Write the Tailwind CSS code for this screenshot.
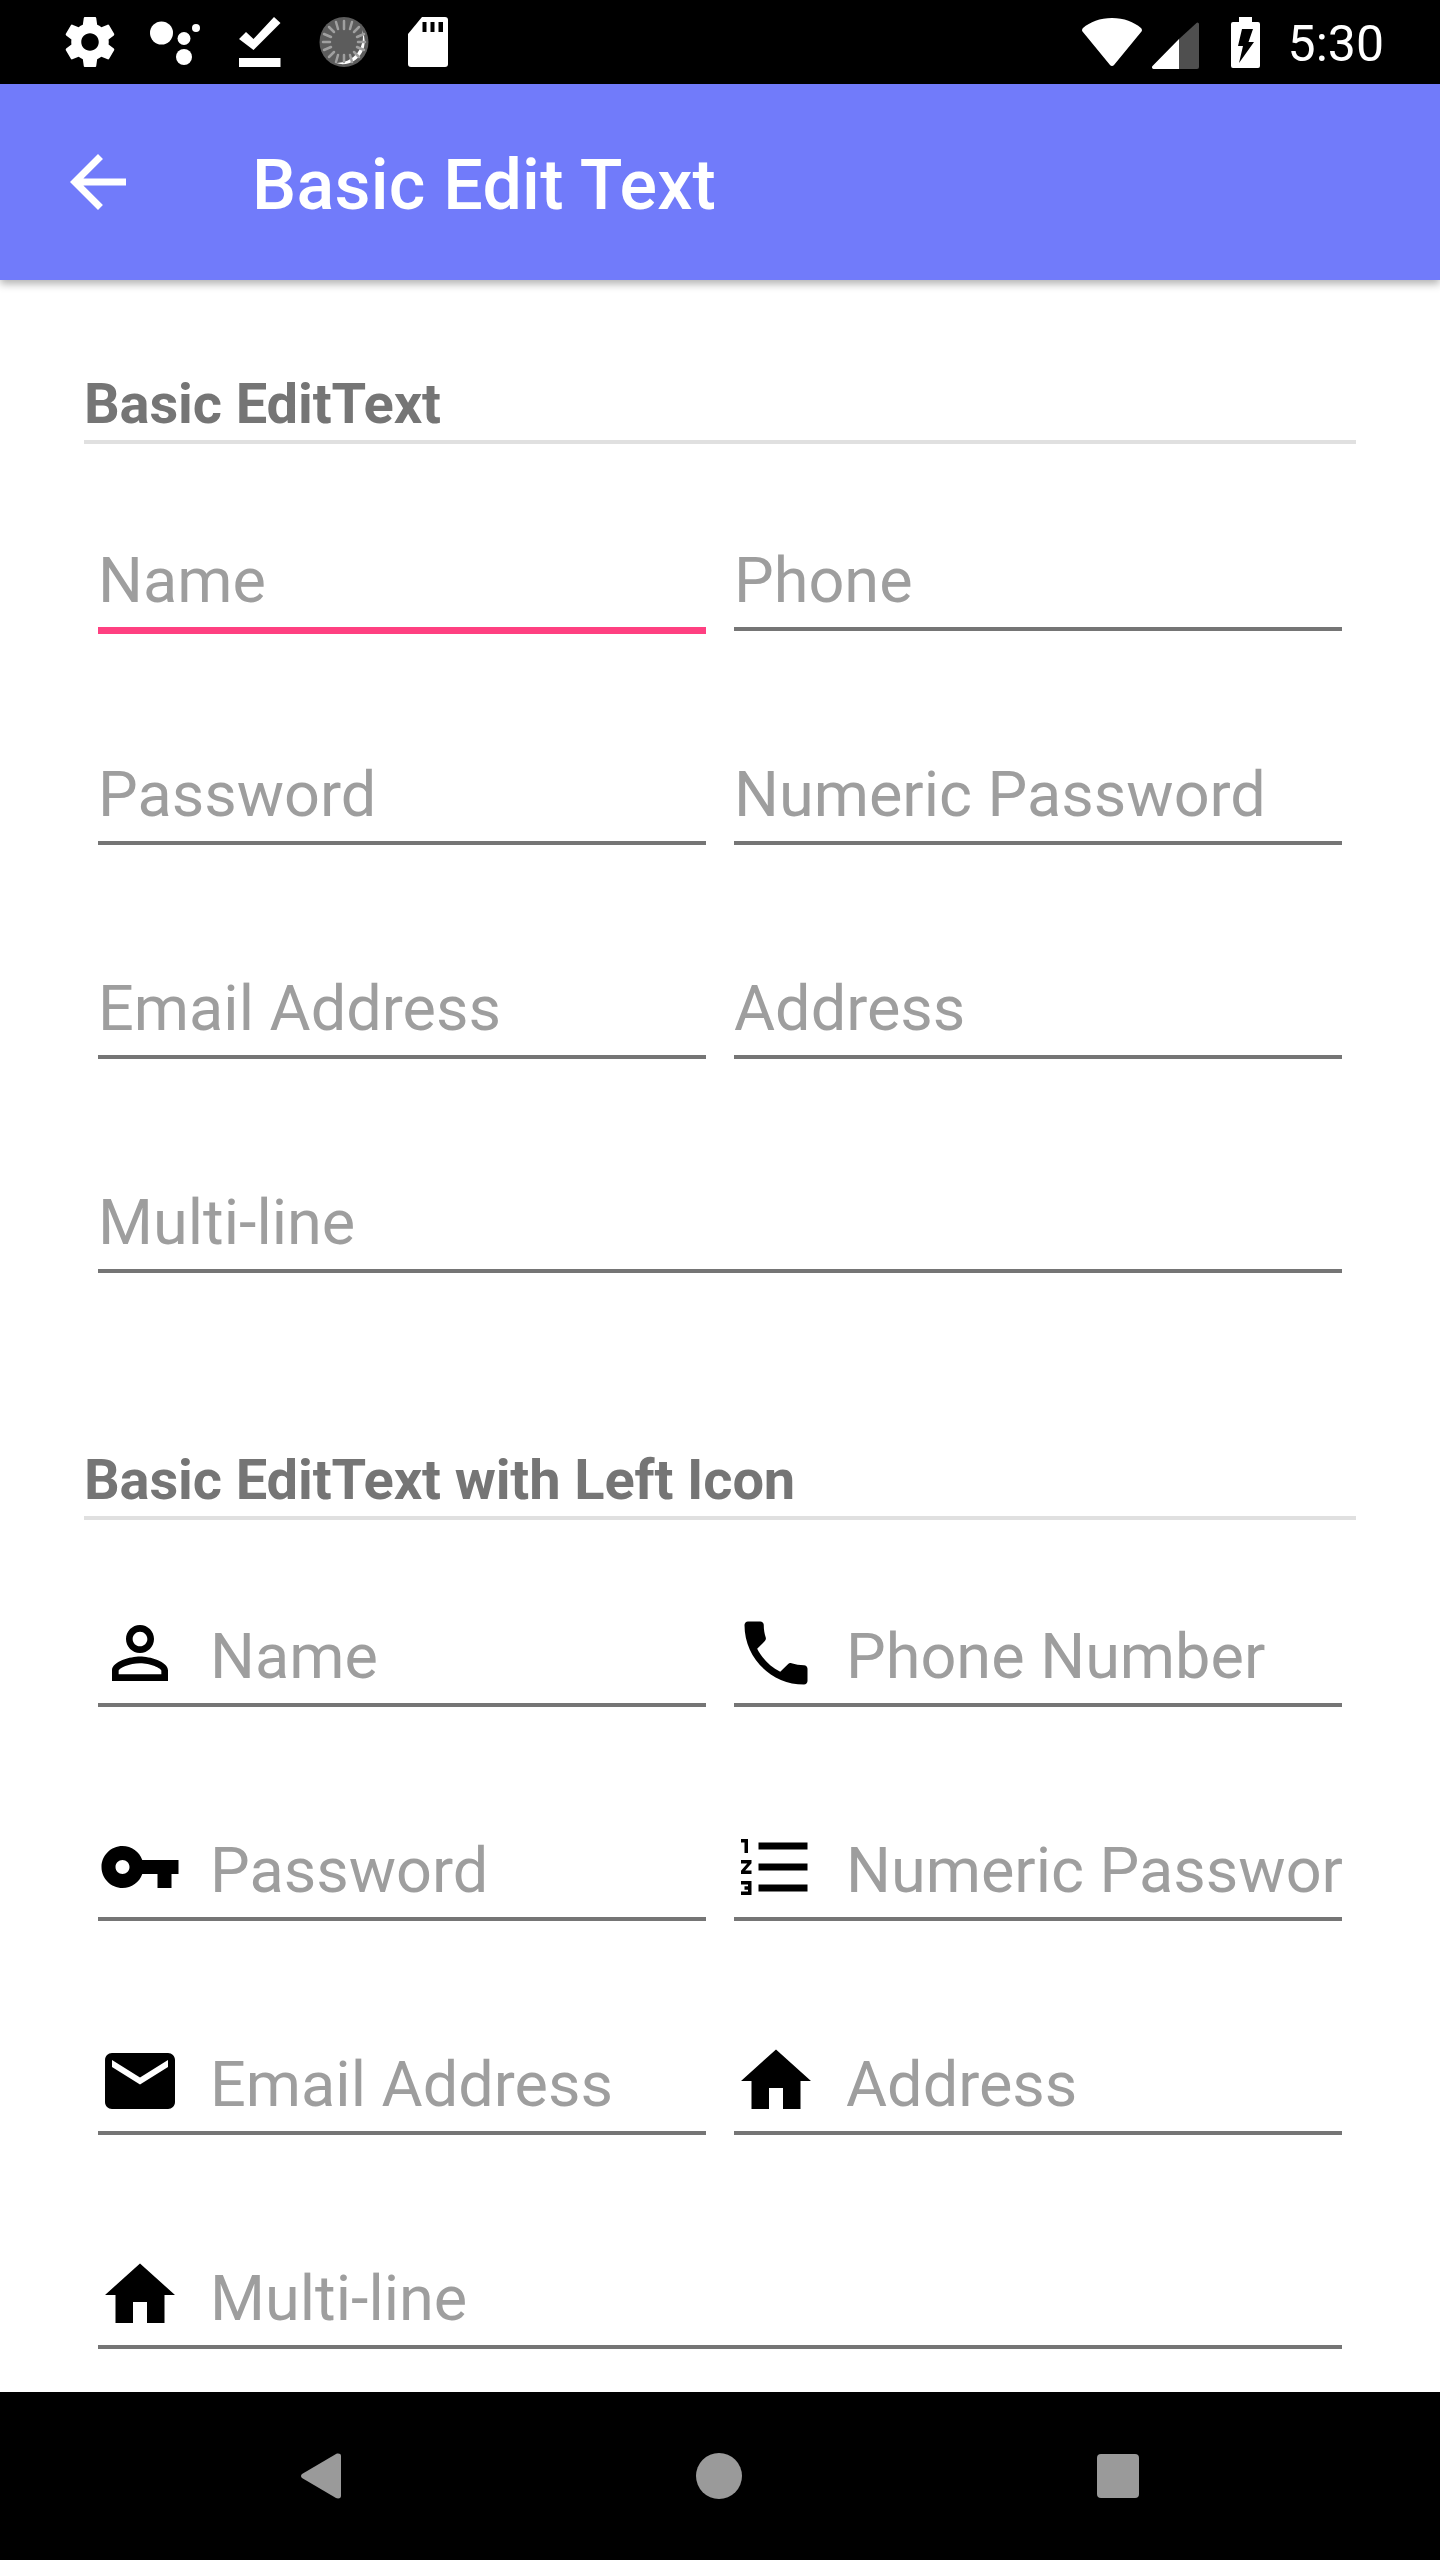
<!DOCTYPE html>
<html lang="en">
<head>
    <meta charset="UTF-8">
    <meta name="viewport" content="width=device-width, initial-scale=1.0">
    <title>Basic Edit Text</title>
    <script src="https://cdn.jsdelivr.net/npm/@tailwindcss/browser@4"></script>
</head>
<body class="bg-white font-[Roboto,sans-serif]">
    <div class="w-[1440px] h-[2560px] flex flex-col overflow-hidden">

        <!-- status bar -->
        <div class="h-[84px] bg-black shrink-0 flex items-center text-white">
            <div class="flex items-center h-full">
                <svg class="ml-[60px] w-[60px] h-[60px]" viewBox="0 0 24 24" fill="#fff"><path d="M19.43 12.98c.04-.32.07-.64.07-.98s-.03-.66-.07-.98l2.11-1.65c.19-.15.24-.42.12-.64l-2-3.46c-.12-.22-.39-.3-.61-.22l-2.49 1c-.52-.4-1.08-.73-1.69-.98l-.38-2.65C14.46 2.18 14.25 2 14 2h-4c-.25 0-.46.18-.49.42l-.38 2.65c-.61.25-1.17.59-1.69.98l-2.49-1c-.23-.09-.49 0-.61.22l-2 3.46c-.13.22-.07.49.12.64l2.11 1.65c-.04.32-.07.65-.07.98s.03.66.07.98l-2.11 1.65c-.19.15-.24.42-.12.64l2 3.46c.12.22.39.3.61.22l2.49-1c.52.4 1.08.73 1.69.98l.38 2.65c.03.24.24.42.49.42h4c.25 0 .46-.18.49-.42l.38-2.65c.61-.25 1.17-.59 1.69-.98l2.49 1c.23.09.49 0 .61-.22l2-3.46c.12-.22.07-.49-.12-.64l-2.11-1.65zM12 15.5c-1.93 0-3.5-1.57-3.5-3.5s1.57-3.5 3.5-3.5 3.5 1.57 3.5 3.5-1.57 3.5-3.5 3.5z"/></svg>
                <svg class="ml-[24px] w-[56px] h-[60px]" viewBox="144 12 56 60" fill="#fff">
                    <circle cx="161.5" cy="33" r="11.5"/><circle cx="184" cy="38.5" r="6.5"/><circle cx="196" cy="28" r="4"/><circle cx="184" cy="57" r="8"/>
                </svg>
                <svg class="ml-[37px] w-[45px] h-[60px]" viewBox="237 12 45 60" fill="#fff">
                    <polygon points="239,39 246,32 253.500,39 274,17 280.500,23 253.500,50"/><rect x="239" y="58" width="41.500" height="9"/>
                </svg>
                <svg class="ml-[35px] w-[54px] h-[60px]" viewBox="316 12 54 60">
                    <ellipse cx="343" cy="42" rx="24.500" ry="25" fill="#5c5c5c"/>
                    <path d="M 361 30 A 22 23 0 0 1 335 63 A 26 26 0 0 0 361 30 Z" fill="#fff"/>
                    <g stroke="#a0a0a0" stroke-width="2.500" stroke-linecap="round">
                        <path d="M343 21v8M343 55v7M322 42h7M357 42h7M328 27l5 5M353 52l5 5M358 27l-5 5M333 52l-5 5M335 22l2 7M349 55l2 7M351 22l-2 7M337 55l-2 7M323 34l7 3M356 47l7 3M363 34l-7 3M330 47l-7 3"/>
                    </g>
                </svg>
                <svg class="ml-[37px] w-[40px] h-[50px]" viewBox="407 17 40 50">
                    <path d="M421 17h23a3 3 0 0 1 3 3v44a3 3 0 0 1-3 3h-34a3 3 0 0 1-3-3v-30z" fill="#fff"/>
                    <path d="M421.500 22h4v10h-4zM429.500 22h4v10h-4zM437.500 22h4.500v10h-4.500z" fill="#000"/>
                </svg>
            </div>
            <div class="ml-auto flex items-center h-full">
                <svg class="w-[60px] h-[48px]" viewBox="1082 17 60 48" fill="#fff">
                    <path d="M1112 17c12 0 22 4 29 10 1 1 1.300 2.500.500 3.500l-27.500 33.500c-1 1.300-3 1.300-4 0l-27.500-33.500c-.800-1-.500-2.500.500-3.500 7-6 17-10 29-10z"/>
                </svg>
                <svg class="ml-[10px] mt-[6px] w-[47px] h-[47px]" viewBox="1152 20 47 47">
                    <path d="M1179 37v30h18a2 2 0 0 0 2-2v-43a1.500 1.500 0 0 0-2.500-1z" fill="#4f4f4f"/>
                    <path d="M1179 37l-26.500 27c-1 1-.500 3 1 3h25.500z" fill="#fff"/>
                </svg>
                <svg class="ml-[32px] w-[29px] h-[51px]" viewBox="1231 16 29 51">
                    <path d="M1239 16h13v5h6a2 2 0 0 1 2 2v42a2 2 0 0 1-2 2h-25a2 2 0 0 1-2-2v-42a2 2 0 0 1 2-2h6z" fill="#fff"/>
                    <polygon points="1242,28 1253,28 1248.500,41 1254,41 1239,62 1243,45 1238,45" fill="#000"/>
                </svg>
                <span class="ml-[28px] mr-[56px] mt-[4px] text-[50px] leading-none font-normal">5:30</span>
            </div>
        </div>

        <!-- app bar -->
        <div class="h-[196px] bg-[#717bfa] shrink-0 flex items-center relative z-10 shadow-[0_4px_8px_rgba(0,0,0,0.3)]">
            <svg class="ml-[56px] w-[84px] h-[84px]" viewBox="0 0 24 24" fill="#fff"><path d="M20 11H7.830l5.590-5.590L12 4l-8 8 8 8 1.410-1.410L7.830 13H20v-2z"/></svg>
            <h1 class="ml-[112px] mt-[6px] text-[70px] leading-none font-medium tracking-[0.25px] text-white">Basic Edit Text</h1>
        </div>

        <!-- content -->
        <div class="flex-1 overflow-hidden px-[84px] pt-[92px]">
            <section>
                <h2 class="h-[72px] border-b-4 border-[#e0e0e0] text-[56px] leading-[65px] font-bold tracking-[-0.12px] text-[#757575]">Basic EditText</h2>
                <div class="mt-[67px] mx-[14px] grid grid-cols-2 gap-x-[28px] gap-y-[94px] auto-rows-[120px]">
                    <div class="h-[123px] -mb-[3px] pt-[24px] border-b-[7px] border-[#ff4081] flex items-center overflow-hidden text-[63px] text-[#9e9e9e]">Name</div>
                    <div class="pt-[24px] border-b-4 border-[#757575] flex items-center overflow-hidden text-[63px] text-[#9e9e9e]">Phone</div>
                    <div class="pt-[24px] border-b-4 border-[#757575] flex items-center overflow-hidden text-[63px] text-[#9e9e9e]">Password</div>
                    <div class="pt-[24px] border-b-4 border-[#757575] flex items-center overflow-hidden text-[63px] text-[#9e9e9e]">Numeric Password</div>
                    <div class="pt-[24px] border-b-4 border-[#757575] flex items-center overflow-hidden text-[63px] text-[#9e9e9e]">Email Address</div>
                    <div class="pt-[24px] border-b-4 border-[#757575] flex items-center overflow-hidden text-[63px] text-[#9e9e9e]">Address</div>
                    <div class="pt-[24px] col-span-2 border-b-4 border-[#757575] flex items-center overflow-hidden text-[63px] text-[#9e9e9e]">Multi-line</div>
                </div>
            </section>

            <section class="mt-[175px]">
                <h2 class="h-[72px] border-b-4 border-[#e0e0e0] text-[56px] leading-[65px] font-bold tracking-[-0.12px] text-[#757575]">Basic EditText with Left Icon</h2>
                <div class="mt-[67px] mx-[14px] grid grid-cols-2 gap-x-[28px] gap-y-[94px] auto-rows-[120px]">
                    <div class="pt-[24px] border-b-4 border-[#757575] flex items-center gap-[28px] overflow-hidden whitespace-nowrap text-[63px] text-[#9e9e9e]">
                        <svg class="w-[84px] h-[84px] shrink-0 -mt-[8px]" viewBox="0 0 24 24" fill="#000"><path d="M12 5.900c1.160 0 2.100.940 2.100 2.100s-.940 2.100-2.100 2.100S9.900 9.160 9.900 8s.940-2.100 2.100-2.100m0 9c2.970 0 6.100 1.460 6.100 2.100v1.100H5.900V17c0-.640 3.130-2.100 6.100-2.100M12 4C9.790 4 8 5.790 8 8s1.790 4 4 4 4-1.790 4-4-1.790-4-4-4zm0 9c-2.670 0-8 1.340-8 4v3h16v-3c0-2.660-5.330-4-8-4z"/></svg>
                        Name
                    </div>
                    <div class="pt-[24px] border-b-4 border-[#757575] flex items-center gap-[28px] overflow-hidden whitespace-nowrap text-[63px] text-[#9e9e9e]">
                        <svg class="w-[84px] h-[84px] shrink-0 -mt-[8px]" viewBox="0 0 24 24" fill="#000"><path d="M6.620 10.790c1.440 2.830 3.760 5.140 6.590 6.590l2.200-2.200c.270-.270.670-.360 1.020-.240 1.120.370 2.330.570 3.570.570.550 0 1 .450 1 1V20c0 .550-.450 1-1 1-9.390 0-17-7.610-17-17 0-.550.450-1 1-1h3.500c.550 0 1 .450 1 1 0 1.250.200 2.450.570 3.570.110.350.030.740-.250 1.020l-2.200 2.200z"/></svg>
                        Phone Number
                    </div>
                    <div class="pt-[24px] border-b-4 border-[#757575] flex items-center gap-[28px] overflow-hidden whitespace-nowrap text-[63px] text-[#9e9e9e]">
                        <svg class="w-[84px] h-[84px] shrink-0 -mt-[8px]" viewBox="0 0 24 24" fill="#000"><path d="M12.650 10C11.830 7.670 9.610 6 7 6c-3.310 0-6 2.690-6 6s2.690 6 6 6c2.610 0 4.830-1.670 5.650-4H17v4h4v-4h2v-4H12.650zM7 14c-1.100 0-2-.900-2-2s.900-2 2-2 2 .900 2 2-.900 2-2 2z"/></svg>
                        Password
                    </div>
                    <div class="pt-[24px] border-b-4 border-[#757575] flex items-center gap-[28px] overflow-hidden whitespace-nowrap text-[63px] text-[#9e9e9e]">
                        <svg class="w-[84px] h-[84px] shrink-0 -mt-[8px]" viewBox="0 0 24 24" fill="#000"><path d="M2 17h2v.500H3v1h1v.500H2v1h3v-4H2v1zm1-9h1V4H2v1h1v3zm-1 3h1.800L2 13.100v.900h3v-1H3.200L5 10.900V10H2v1zm5-6v2h14V5H7zm0 14h14v-2H7v2zm0-6h14v-2H7v2z"/></svg>
                        Numeric Password
                    </div>
                    <div class="pt-[24px] border-b-4 border-[#757575] flex items-center gap-[28px] overflow-hidden whitespace-nowrap text-[63px] text-[#9e9e9e]">
                        <svg class="w-[84px] h-[84px] shrink-0 -mt-[8px]" viewBox="0 0 24 24" fill="#000"><path d="M20 4H4c-1.100 0-1.990.900-1.990 2L2 18c0 1.100.900 2 2 2h16c1.100 0 2-.900 2-2V6c0-1.100-.900-2-2-2zm0 4l-8 5-8-5V6l8 5 8-5v2z"/></svg>
                        Email Address
                    </div>
                    <div class="pt-[24px] border-b-4 border-[#757575] flex items-center gap-[28px] overflow-hidden whitespace-nowrap text-[63px] text-[#9e9e9e]">
                        <svg class="w-[84px] h-[84px] shrink-0 -mt-[8px]" viewBox="0 0 24 24" fill="#000"><path d="M10 20v-6h4v6h5v-8h3L12 3 2 12h3v8z"/></svg>
                        Address
                    </div>
                    <div class="pt-[24px] col-span-2 border-b-4 border-[#757575] flex items-center gap-[28px] overflow-hidden whitespace-nowrap text-[63px] text-[#9e9e9e]">
                        <svg class="w-[84px] h-[84px] shrink-0 -mt-[8px]" viewBox="0 0 24 24" fill="#000"><path d="M10 20v-6h4v6h5v-8h3L12 3 2 12h3v8z"/></svg>
                        Multi-line
                    </div>
                </div>
            </section>
        </div>

        <!-- nav bar -->
        <div class="h-[168px] bg-black shrink-0 flex items-center relative">
            <svg class="ml-[301px] w-[40px] h-[46px]" viewBox="0 0 40 46" fill="#9a9a9a"><path d="M1 21 35 1c2-1 5-.500 5 2v40c0 2.500-3 3-5 2L1 25c-1.300-1-1.300-3 0-4z"/></svg>
            <div class="ml-[355px] w-[46px] h-[46px] rounded-full bg-[#9a9a9a]"></div>
            <div class="ml-[355px] w-[42px] h-[44px] rounded-[4px] bg-[#9a9a9a]"></div>
        </div>
    </div>
</body>
</html>
